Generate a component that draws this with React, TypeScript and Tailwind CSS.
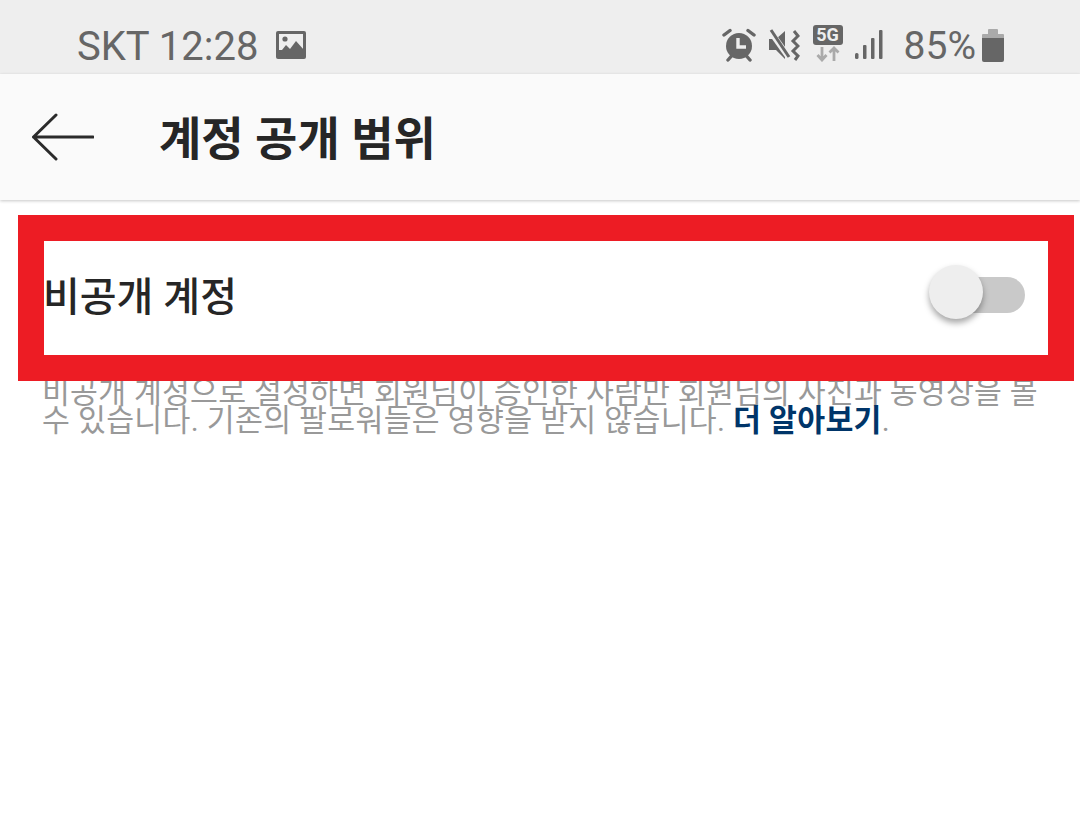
const cjk = "font-['Roboto','Noto_Sans_CJK_KR',sans-serif]";

function ImageIcon() {
  return (
    <svg width="32" height="30" viewBox="0 0 32 30" className="ml-[17px]">
      <rect x="1" y="1" width="30" height="28" rx="2" fill="#666" />
      <rect x="4" y="4" width="24" height="16" fill="#eee" />
      <circle cx="10" cy="9" r="2.6" fill="#666" />
      <path d="M3 25 L11 15 L15 19 L21 11 L29 20 V27 H3 Z" fill="#666" />
    </svg>
  );
}

function AlarmIcon() {
  return (
    <svg width="34" height="34" viewBox="0 0 34 34">
      <circle cx="17" cy="18" r="13" fill="#666" />
      <path d="M2 7 L8 2.5 M32 7 L26 2.5 M6 32 L9.500 28 M28 32 L24.500 28" stroke="#666" strokeWidth="3.4" strokeLinecap="round" />
      <path d="M16 10 V19 H24" stroke="#eee" strokeWidth="3.4" fill="none" />
    </svg>
  );
}

function MuteIcon() {
  return (
    <svg width="32" height="32" viewBox="0 0 32 32" className="ml-[12px]">
      <path d="M1 10 H8 L17 2 V30 L8 21 H1 Z" fill="#666" />
      <path d="M2 2 L22 30" stroke="#eee" strokeWidth="6" />
      <path d="M3 1 L21 28" stroke="#666" strokeWidth="3" />
      <path d="M26 2 L30 7 L25 12 L30 17 L25 22 L30 27 L27 31" stroke="#666" strokeWidth="3" fill="none" />
    </svg>
  );
}

function FiveGIcon() {
  return (
    <div className="mb-[4px] ml-[13px] flex w-[30px] flex-col items-center">
      <div className="flex h-[20px] w-[30px] items-center justify-center rounded-[3px] bg-[#666] font-['Roboto',sans-serif] text-[18px] leading-none font-bold text-[#eee]">
        5G
      </div>
      <svg width="24" height="16" viewBox="0 0 24 16" className="mt-[1px]">
        <path d="M6 1 V13 M1.500 9 L6 14 L10.500 9" stroke="#aaa" strokeWidth="2.8" fill="none" />
        <path d="M18 15 V2 M13.500 6.500 L18 2 L22.500 6.500" stroke="#aaa" strokeWidth="2.8" fill="none" />
      </svg>
    </div>
  );
}

function SignalIcon() {
  return (
    <svg width="28" height="30" viewBox="0 0 28 30" className="ml-[12px]">
      <rect x="0" y="23" width="3.500" height="6" rx="1.500" fill="#666" />
      <rect x="8" y="15" width="3.500" height="14" rx="1" fill="#666" />
      <rect x="16" y="8" width="3.500" height="21" rx="1" fill="#666" />
      <rect x="24" y="0" width="3.500" height="29" rx="1" fill="#666" />
    </svg>
  );
}

function BatteryIcon() {
  return (
    <svg width="22" height="33" viewBox="0 0 22 33">
      <path d="M6 1 Q6 0 7 0 H15 Q16 0 16 1 V5 H21 Q22 5 22 6 V9 H0 V6 Q0 5 1 5 H6 Z" fill="#aaa" />
      <path d="M0 9 H22 V31 Q22 33 20 33 H2 Q0 33 0 31 Z" fill="#666" />
    </svg>
  );
}

export default function App() {
  return (
    <div className={`flex h-[834px] w-[1080px] flex-col overflow-hidden bg-white ${cjk}`}>
      <div className="flex h-[74px] items-center justify-between bg-[#eeeeee] pt-[16px] pr-[76px] pl-[77px] text-[#666]">
        <div className="flex items-center">
          <span className="mt-[3px] text-[40px] leading-none whitespace-nowrap">SKT 12:28</span>
          <ImageIcon />
        </div>
        <div className="flex items-center">
          <AlarmIcon />
          <MuteIcon />
          <FiveGIcon />
          <SignalIcon />
          <span className="mt-[3px] ml-[21px] text-[39px] leading-none whitespace-nowrap">85%</span>
          <div className="ml-[6px]">
            <BatteryIcon />
          </div>
        </div>
      </div>

      <div className="flex h-[126px] items-center bg-[#fafafa] pl-[32px] shadow-[0_1px_3px_rgba(0,0,0,0.22)]">
        <svg width="62" height="48" viewBox="0 0 62 48">
          <path d="M24 2 L1.500 24 L24 46 M1.500 24 H61" stroke="#2b2b2b" strokeWidth="3" fill="none" strokeLinecap="round" strokeLinejoin="round" />
        </svg>
        <h1 className="mt-[3px] ml-[65px] text-[46px] leading-none font-bold whitespace-nowrap text-[#262626]">계정 공개 범위</h1>
      </div>

      <div className="relative pt-[41px]">
        <div className="flex h-[114px] items-center justify-between pr-[55px] pl-[43px]">
          <span className="text-[40px] leading-none font-medium whitespace-nowrap text-[#262626]">비공개 계정</span>
          <div className="relative mb-[6px] h-[36px] w-[84px] rounded-full bg-[#c9c9c9]">
            <div className="absolute top-[-12px] left-[-12px] h-[54px] w-[54px] rounded-full bg-[#eeeeee] shadow-[0_4px_6px_rgba(0,0,0,0.35)]" />
          </div>
        </div>
        <p className="mt-[24px] pl-[42px] text-[30.3px] leading-[28px] whitespace-nowrap text-[#999]">
          <span className="block tracking-[0.2px]">비공개 계정으로 설정하면 회원님이 승인한 사람만 회원님의 사진과 동영상을 볼</span>
          <span className="block tracking-[0.3px]">수 있습니다. 기존의 팔로워들은 영향을 받지 않습니다. <span className="font-bold text-[#003569]">더 알아보기</span>.</span>
        </p>
        <div className="pointer-events-none absolute top-[15px] left-[18px] h-[166px] w-[1056px] border-[26px] border-[#ed1c24]" />
      </div>
    </div>
  );
}
